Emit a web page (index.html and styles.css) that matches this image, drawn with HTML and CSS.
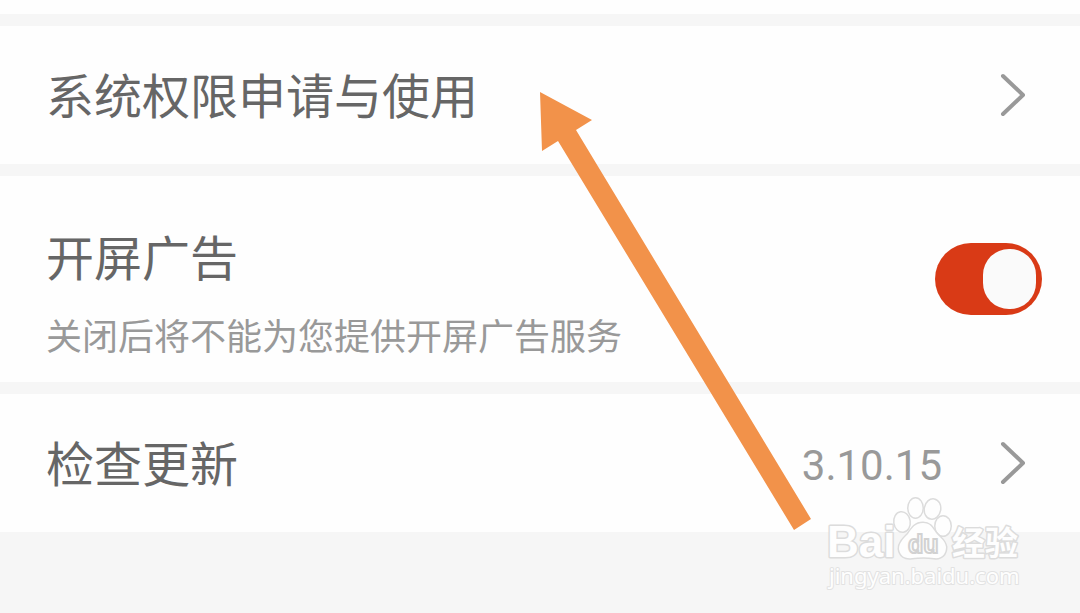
FILE: index.html
```html
<!DOCTYPE html>
<html lang="zh-CN">
<head>
<meta charset="utf-8">
<meta name="viewport" content="width=device-width, initial-scale=1">
<title>设置</title>
<link rel="stylesheet" href="styles.css">
</head>
<body>
<main class="settings">
  <a class="row row-link" href="#permissions">
    <span class="title">系统权限申请与使用</span>
    <svg class="chevron" viewBox="0 0 26 44" aria-hidden="true"><path d="M3 3L23 22L3 41"/></svg>
  </a>
  <div class="row row-switch">
    <label class="copy" for="splash">
      <span class="title">开屏广告</span>
      <span class="note">关闭后将不能为您提供开屏广告服务</span>
    </label>
    <input class="switch" id="splash" type="checkbox" role="switch" checked>
  </div>
  <a class="row row-link" href="#update">
    <span class="title">检查更新</span>
    <span class="version">3.10.15</span>
    <svg class="chevron" viewBox="0 0 26 44" aria-hidden="true"><path d="M3 3L23 22L3 41"/></svg>
  </a>
</main>
<svg class="arrow" viewBox="0 0 272 440" aria-hidden="true"><path d="M0 0L52 28L36 38L271 427L254 438L18 49L2 59Z"/></svg>
<svg class="watermark" viewBox="0 0 200 100" role="img" aria-label="Baidu 经验 jingyan.baidu.com">
  <g class="mark">
    <text class="brand" x="1" y="60">Bai</text>
    <g class="paw">
      <ellipse cx="76" cy="25" rx="7.5" ry="9.5" transform="rotate(-8 76 25)"/>
      <ellipse cx="89.5" cy="11" rx="7" ry="9.5"/>
      <ellipse cx="106.5" cy="12" rx="7.5" ry="9.5" transform="rotate(10 106.5 12)"/>
      <ellipse cx="117" cy="29" rx="7.5" ry="9.5"/>
      <path d="M97 26C89 26 86 31 82 37C77 42 73 46 73 52C74 59 79 62 86 61C94 60 101 60 108 61C116 62 120 57 120 50C119 43 114 41 110 36C106 30 104 26 97 26Z"/>
    </g>
    <text class="cjk" x="126" y="58">经验</text>
    <text class="domain" x="3" y="87">jingyan.baidu.com</text>
  </g>
  <text class="du" x="82" y="56">du</text>
</svg>
</body>
</html>
```
FILE: styles.css
```css
* { box-sizing: border-box; }
body {
  position: relative;
  margin: 0;
  padding-top: 14px;
  min-height: 100vh;
  background: linear-gradient(#fefefe 14px, #f6f6f6 14px);
  font-family: "Noto Sans CJK SC", sans-serif;
}
.settings {
  display: flex;
  flex-direction: column;
  gap: 12px;
  padding-top: 12px;
}
.row {
  display: flex;
  align-items: center;
  background: #fefefe;
  color: #666;
  text-decoration: none;
}
.row-link { min-height: 138px; padding: 0 54px 0 46px; }
.row-switch { min-height: 206px; padding: 0 38px 0 46px; }
.title { flex: 1; padding-bottom: 4px; font-size: 48px; line-height: 72px; }
.copy { flex: 1; display: flex; flex-direction: column; gap: 12px; padding-top: 22px; }
.note { color: #999; font-size: 36px; line-height: 54px; }
.version {
  margin-right: 58px;
  padding-top: 6px;
  color: #999;
  font-family: Roboto, sans-serif;
  font-size: 42px;
  line-height: 60px;
}
.chevron {
  width: 26px;
  height: 44px;
  fill: none;
  stroke: #999;
  stroke-width: 4;
  stroke-linecap: round;
  stroke-linejoin: round;
}
.switch {
  appearance: none;
  display: flex;
  align-items: center;
  justify-content: flex-end;
  width: 107px;
  height: 72px;
  margin: 0;
  padding: 6px;
  border-radius: 36px;
  background: #d93a16;
}
.switch::before {
  content: "";
  width: 53px;
  height: 60px;
  border-radius: 26px;
  background: #fafafa;
}
.switch:not(:checked) { justify-content: flex-start; background: #ccc; }
.arrow {
  position: absolute;
  left: 540px;
  top: 92px;
  width: 272px;
  height: 440px;
  fill: #f2924a;
  pointer-events: none;
}
.watermark {
  position: absolute;
  left: 826px;
  top: 497px;
  width: 200px;
  height: 100px;
  overflow: visible;
  pointer-events: none;
}
.mark {
  fill: #fefefe;
  stroke: #dcdcdc;
  stroke-width: 3;
  stroke-linejoin: round;
  paint-order: stroke;
}
.brand { font: bold 44px "Liberation Sans", sans-serif; }
.du { font: bold 25px "Liberation Sans", sans-serif; fill: #fefefe; stroke: #d2d2d2; stroke-width: 2; }
.cjk { font: bold 33px "Noto Sans CJK SC", sans-serif; }
.domain { font: 22px "Noto Sans", sans-serif; stroke: #e2e2e2; stroke-width: 2; }
```
